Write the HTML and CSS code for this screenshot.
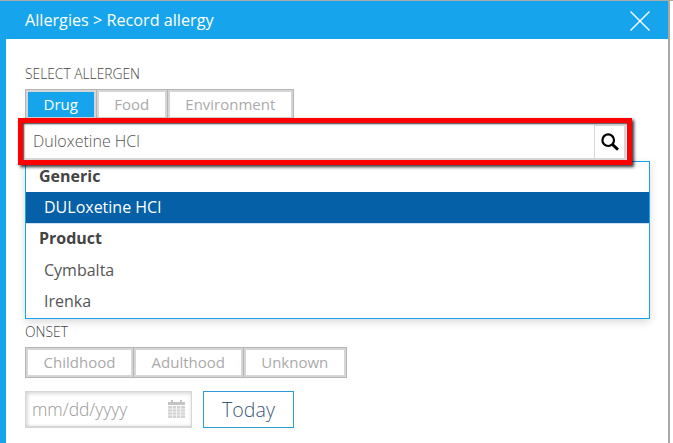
FILE: index.html
```html
<!DOCTYPE html>
<html lang="en">
  <head>
    <meta charset="UTF-8" />
    <title>Record allergy</title>
    <link rel="stylesheet" href="styles.css">
  </head>
  <body>
    <div class="dialog">
      <header class="titlebar">
        <span>Allergies &gt; Record allergy</span>
        <svg class="close" width="20" height="20" viewBox="0 0 20 20">
          <path d="M0.5 0.5 L19.5 19.5 M19.5 0.5 L0.5 19.5" stroke="#fff" stroke-width="1.4" fill="none" />
        </svg>
      </header>

      <main class="content">
        <div class="label">SELECT ALLERGEN</div>
        <div class="tabs">
          <div class="tab active">Drug</div>
          <div class="tab">Food</div>
          <div class="tab">Environment</div>
        </div>

        <div class="search-box">
          <div class="search-text">Duloxetine HCl</div>
          <div class="search-btn">
            <svg width="20" height="20" viewBox="0 0 20 20">
              <circle cx="8.2" cy="8.2" r="5.8" stroke="#000" stroke-width="2.2" fill="none" />
              <path d="M12.6 12.6 L18 17.6" stroke="#000" stroke-width="2.8" fill="none" />
            </svg>
          </div>
        </div>

        <div class="results">
          <div class="group first">Generic</div>
          <div class="item selected">DULoxetine HCl</div>
          <div class="group">Product</div>
          <div class="item">Cymbalta</div>
          <div class="item">Irenka</div>
        </div>

        <div class="label onset">ONSET</div>
        <div class="tabs">
          <div class="tab">Childhood</div>
          <div class="tab">Adulthood</div>
          <div class="tab">Unknown</div>
        </div>

        <div class="date-row">
          <div class="date-input">
            <span>mm/dd/yyyy</span>
            <svg width="17" height="18" viewBox="0 0 17 18">
              <path d="M3 0h2v3H3z M12 0h2v3h-2z" fill="#c4c4c4" />
              <path d="M0 2h17v3H0z" fill="#c4c4c4" />
              <path d="M0 6h17v12H0z" fill="#d2d2d2" />
              <path d="M0 9h17 M0 12h17 M0 15h17 M4.5 6v12 M8.5 6v12 M12.5 6v12" stroke="#f2f2f2" stroke-width="1" />
            </svg>
          </div>
          <button class="today">Today</button>
        </div>
      </main>
    </div>
  </body>
</html>
```

FILE: styles.css
```css
* {
  margin: 0;
  padding: 0;
  box-sizing: border-box;
}

body {
  font-family: "Open Sans", sans-serif;
  background-color: #fff;
  color: #555;
  height: 443px;
  overflow: hidden;
  border-top: 1px solid #a9a9a9;
}

.dialog {
  width: 670px;
  height: 442px;
  border-left: 6px solid #16a5ec;
  border-right: 2px solid #a9a9a9;
}

.titlebar {
  height: 38px;
  margin-left: -6px;
  padding: 0 18px 0 25px;
  background-color: #16a5ec;
  color: #fff;
  font-size: 16.2px;
  display: flex;
  align-items: center;
  justify-content: space-between;
}

.close {
  margin-top: 2px;
}

.content {
  padding: 27px 0 0 19px;
}

.label {
  font-size: 13.8px;
  font-weight: 300;
  line-height: 16px;
  color: #444;
}

.tabs {
  display: flex;
  gap: 1px;
  margin-top: 7px;
  width: fit-content;
  border: 1px solid #b4b4b4;
  background-color: #b4b4b4;
}

.tab {
  height: 29px;
  padding: 0 15.6px;
  font-size: 15px;
  line-height: 25px;
  color: #aaa;
  background-color: #fff;
  border: 2px solid #d6d6d6;
}

.tab.active {
  background-color: #16a5ec;
  color: #fff;
}

/* red annotation round the search field */
.search-box {
  position: relative;
  z-index: 2;
  display: flex;
  width: 614px;
  height: 47px;
  margin: -2px 0 0 -7px;
  padding: 2px 1px 0 2px;
  border: 5px solid #f00;
  box-shadow: 2px 2px 3px rgba(0, 0, 0, 0.8), inset 1px 1px 2px rgba(0, 0, 0, 0.8);
  background-color: #fff;
}

.search-text {
  flex: 1;
  padding-left: 8px;
  font-size: 16px;
  font-weight: 300;
  line-height: 32px;
  color: #555;
  border-bottom: 2px solid #d6d6d6;
}

.search-btn {
  width: 32px;
  display: flex;
  align-items: center;
  justify-content: center;
  border: 1px solid #d6d6d6;
  border-bottom-width: 2px;
  border-right-width: 2px;
}

.results {
  width: 625px;
  height: 158px;
  margin-top: -4px;
  border: 1px solid #16a5ec;
  box-shadow: 0 3px 8px rgba(0, 0, 0, 0.15);
  background-color: #fff;
}

.group {
  height: 31px;
  padding-left: 13px;
  font-size: 16px;
  line-height: 28px;
  font-weight: 700;
  color: #444;
}

.group.first {
  height: 30px;
}

.item {
  height: 31px;
  padding-left: 18px;
  font-size: 16px;
  line-height: 31px;
  color: #555;
}

.item.selected {
  height: 32px;
  background-color: #0560a8;
  border-bottom: 1px solid #cfe0ee;
  color: #fff;
}

.onset {
  margin-top: 5px;
}

.date-row {
  display: flex;
  gap: 11px;
  margin-top: 13px;
}

.date-input {
  width: 167px;
  height: 37px;
  padding: 0 6px;
  display: flex;
  align-items: center;
  justify-content: space-between;
  border: 1px solid #d6d6d6;
  border-bottom-width: 2px;
  box-shadow: inset 1px 1px 4px rgba(0, 0, 0, 0.2);
  font-size: 17.4px;
  font-weight: 300;
  color: #999;
}

.today {
  width: 91px;
  height: 37px;
  border: 1px solid #2d9bd6;
  background-color: #fff;
  font-family: "Open Sans", sans-serif;
  font-size: 19.6px;
  font-weight: 300;
  color: #3a5a7a;
}
```
